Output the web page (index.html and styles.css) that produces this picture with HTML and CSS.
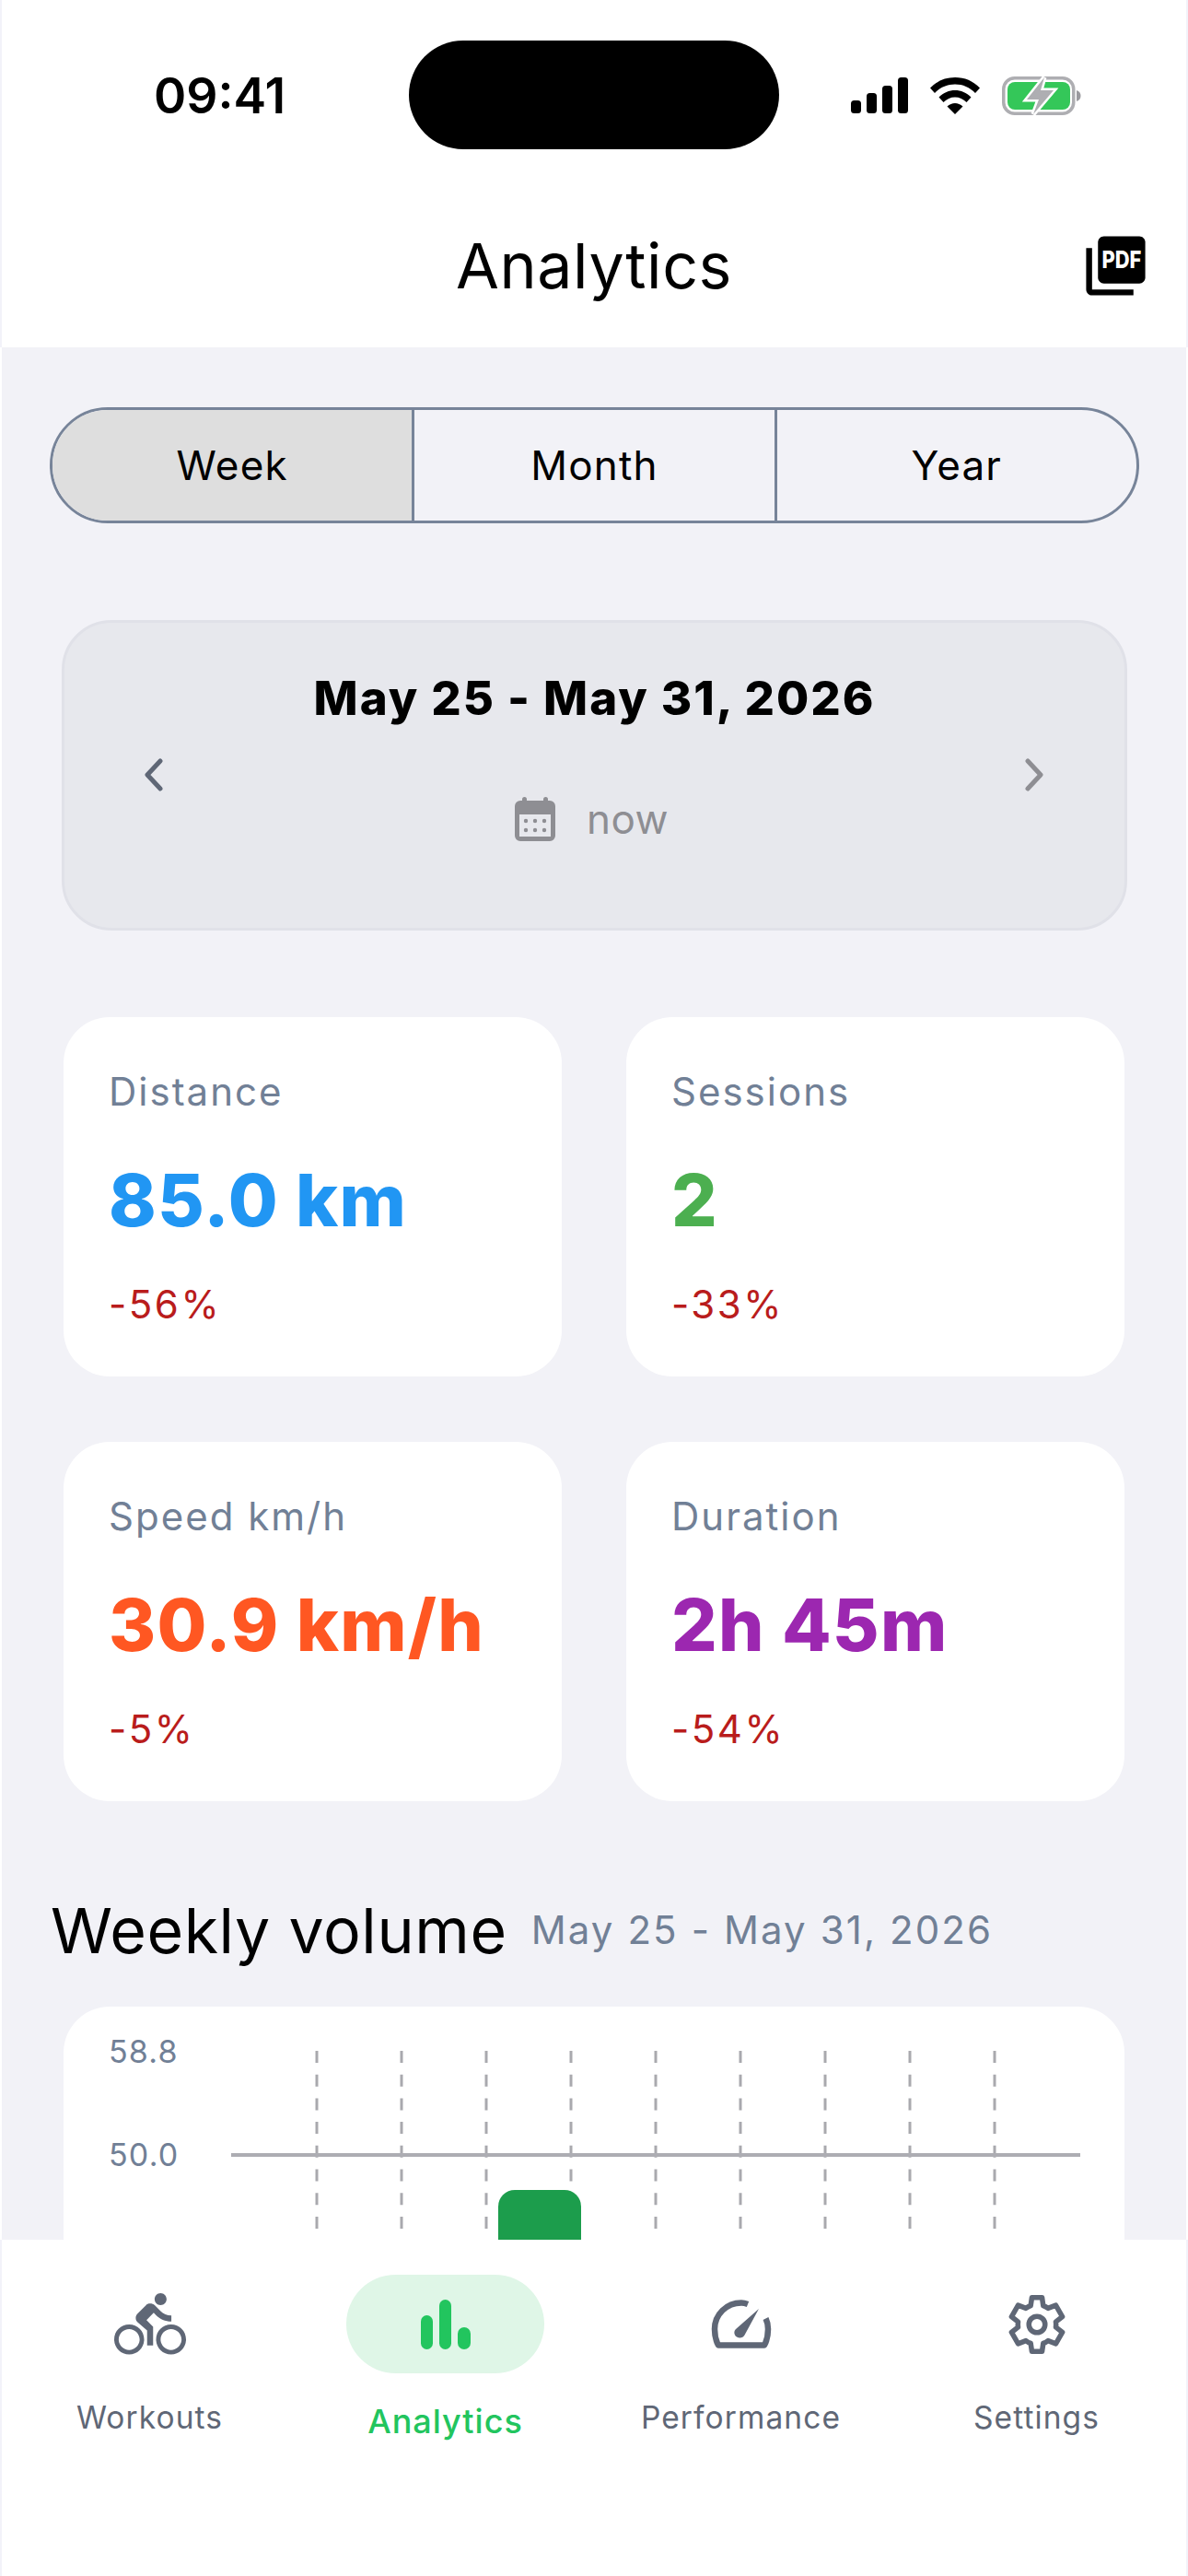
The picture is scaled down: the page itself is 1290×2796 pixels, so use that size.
FILE: index.html
```html
<!DOCTYPE html>
<html lang="en">
<head>
<meta charset="utf-8">
<title>Analytics</title>
<link rel="stylesheet" href="styles.css">
</head>
<body>
<div class="screen">
  <header class="top">
    <div class="status">
      <span class="time">09:41</span>
      <div class="island"></div>
      <div class="status-icons">
        <svg class="ic-signal" viewBox="0 0 62 39"><rect x="0" y="25" width="11" height="14" rx="3.5"/><rect x="17" y="17" width="11" height="22" rx="3.5"/><rect x="34" y="9" width="11" height="30" rx="3.5"/><rect x="51" y="0" width="11" height="39" rx="3.5"/></svg>
        <svg class="ic-wifi" viewBox="0 0 54 40"><path d="M27 0C16.500 0 7.500 3.800 0 11.500L5 17C11 10.800 18.500 7.500 27 7.500S43 10.800 49 17L54 11.500C46.500 3.800 37.500 0 27 0Z"/><path d="M27 14C20.500 14 14.500 16.500 9.500 21.500L14.500 27C18 23.500 22.300 21.500 27 21.500S36 23.500 39.500 27L44.500 21.500C39.500 16.500 33.500 14 27 14Z"/><path d="M27 28C24 28 21 29.200 18.500 31.500L27 40L35.500 31.500C33 29.200 30 28 27 28Z"/></svg>
        <svg class="ic-battery" viewBox="0 0 88 42"><rect x="1.750" y="1.750" width="76" height="38.500" rx="12" fill="none" stroke="#aeaeb2" stroke-width="3.500"/><rect x="6" y="6" width="68" height="30" rx="8" fill="#34c759"/><path d="M81 15C84 16 85.500 18 85.500 21S84 26 81 27Z" fill="#9a9a9e"/><path d="M46 1L27 25H40L34 41L56 15H42Z" fill="#aeaeb2" stroke="#fff" stroke-width="5" paint-order="stroke"/></svg>
      </div>
    </div>
    <div class="titlebar">
      <h1 class="title">Analytics</h1>
      <svg class="ic-pdf" viewBox="0 0 24 24"><path d="M20 2H8c-1.100 0-2 .9-2 2v12c0 1.100.9 2 2 2h12c1.100 0 2-.9 2-2V4c0-1.100-.9-2-2-2z"/><path d="M4 6H2v14c0 1.100.9 2 2 2h14v-2H4V6z"/><text x="14" y="12.900" class="pdf-text" textLength="13.400" lengthAdjust="spacingAndGlyphs">PDF</text></svg>
    </div>
  </header>

  <main class="content">
    <div class="segments">
      <div class="segment active">Week</div>
      <div class="segment">Month</div>
      <div class="segment">Year</div>
    </div>

    <section class="date-card">
      <div class="date-title">May 25 - May 31, 2026</div>
      <div class="date-row">
        <svg class="chev chev-dark" viewBox="0 0 21 36"><path d="M18 3L4 18L18 33"/></svg>
        <svg class="chev chev-light" viewBox="0 0 21 36"><path d="M3 3L17 18L3 33"/></svg>
      </div>
      <div class="date-now">
        <svg class="ic-cal" viewBox="0 0 44 48"><rect x="8" y="0" width="5" height="8" rx="2.500"/><rect x="31" y="0" width="5" height="8" rx="2.500"/><path fill-rule="evenodd" d="M6 4H38A6 6 0 0 1 44 10V42A6 6 0 0 1 38 48H6A6 6 0 0 1 0 42V10A6 6 0 0 1 6 4ZM5 19V43H39V19Z"/><circle cx="12" cy="26" r="2.200"/><circle cx="22" cy="26" r="2.200"/><circle cx="32" cy="26" r="2.200"/><circle cx="12" cy="36" r="2.200"/><circle cx="22" cy="36" r="2.200"/><circle cx="32" cy="36" r="2.200"/></svg>
        <span>now</span>
      </div>
    </section>

    <section class="stats">
      <article class="stat">
        <div class="stat-label">Distance</div>
        <div class="stat-value blue">85.0 km</div>
        <div class="stat-delta">-56%</div>
      </article>
      <article class="stat">
        <div class="stat-label">Sessions</div>
        <div class="stat-value green">2</div>
        <div class="stat-delta">-33%</div>
      </article>
      <article class="stat">
        <div class="stat-label">Speed km/h</div>
        <div class="stat-value orange">30.9 km/h</div>
        <div class="stat-delta">-5%</div>
      </article>
      <article class="stat">
        <div class="stat-label">Duration</div>
        <div class="stat-value purple">2h 45m</div>
        <div class="stat-delta">-54%</div>
      </article>
    </section>

    <div class="volume-head">
      <h2 class="volume-title">Weekly volume</h2>
      <span class="volume-range">May 25 - May 31, 2026</span>
    </div>

    <section class="chart-card">
      <div class="axis">
        <span>58.8</span>
        <span>50.0</span>
      </div>
      <svg class="chart" viewBox="0 0 922 340">
        <g class="grid-v">
          <line x1="93" x2="93" y1="0" y2="340"/>
          <line x1="185" x2="185" y1="0" y2="340"/>
          <line x1="277" x2="277" y1="0" y2="340"/>
          <line x1="369" x2="369" y1="0" y2="340"/>
          <line x1="461" x2="461" y1="0" y2="340"/>
          <line x1="553" x2="553" y1="0" y2="340"/>
          <line x1="645" x2="645" y1="0" y2="340"/>
          <line x1="737" x2="737" y1="0" y2="340"/>
          <line x1="829" x2="829" y1="0" y2="340"/>
        </g>
        <line class="grid-h" x1="0" x2="922" y1="113" y2="113"/>
        <path class="bar" d="M290 340V169A18 18 0 0 1 308 151H362A18 18 0 0 1 380 169V340Z"/>
      </svg>
    </section>
  </main>

  <nav class="tabbar">
    <div class="tab">
      <div class="tab-icon">
        <svg viewBox="0 0 24 24"><path d="M15.500 5.500c1.100 0 2-.9 2-2s-.9-2-2-2-2 .9-2 2 .9 2 2 2zM5 12c-2.800 0-5 2.200-5 5s2.200 5 5 5 5-2.200 5-5-2.200-5-5-5zm0 8.500c-1.900 0-3.500-1.600-3.500-3.500s1.600-3.500 3.500-3.500 3.500 1.600 3.500 3.500-1.600 3.500-3.500 3.500zm5.800-10l2.400-2.400.8.800c1.300 1.300 3 2.100 5.100 2.100V9c-1.500 0-2.700-.6-3.600-1.500l-1.900-1.900c-.5-.4-1-.6-1.600-.6s-1.100.2-1.400.6L7.800 8.400c-.4.400-.6.900-.6 1.400 0 .6.2 1.100.6 1.400L11 14v5h2v-6.200l-2.200-2.300zM19 12c-2.800 0-5 2.200-5 5s2.200 5 5 5 5-2.200 5-5-2.200-5-5-5zm0 8.500c-1.900 0-3.500-1.600-3.500-3.500s1.600-3.500 3.500-3.500 3.500 1.600 3.500 3.500-1.600 3.500-3.500 3.500z"/></svg>
      </div>
      <span class="tab-label">Workouts</span>
    </div>
    <div class="tab tab-active">
      <div class="tab-icon">
        <svg viewBox="0 0 54 54"><rect x="0" y="17" width="13" height="37" rx="6.500"/><rect x="20" y="0" width="13" height="54" rx="6.500"/><rect x="40" y="30" width="14" height="24" rx="7"/></svg>
      </div>
      <span class="tab-label">Analytics</span>
    </div>
    <div class="tab">
      <div class="tab-icon">
        <svg viewBox="0 0 78 78"><path class="gauge" d="M46 17C43.500 16 41.500 15.500 39 15.500C23 15.500 10 28 10 44C10 50 11 56 14 61.500H64C67 56 68 50 68 44C68 40 67.200 36 65.500 32.500"/><path d="M58 22L42.500 50.500C41 53.500 37 54.500 34 52.500C31 50.500 30.500 46.500 33 44Z"/></svg>
      </div>
      <span class="tab-label">Performance</span>
    </div>
    <div class="tab">
      <div class="tab-icon">
        <svg viewBox="0 0 24 24"><path class="gear" d="M18.300 12.900c.04-.3.06-.6.06-.9s-.02-.6-.07-.9l2.200-1.700-2.200-3.800-2.600 1c-.5-.4-1-.7-1.600-.9L13.700 3H10.300l-.4 2.700c-.6.2-1.100.5-1.600.9l-2.600-1-2.200 3.800 2.200 1.700c-.05.3-.07.6-.07.9s.02.6.07.9l-2.200 1.700 2.200 3.800 2.600-1c.5.4 1 .7 1.600.9l.4 2.700h3.400l.4-2.700c.6-.2 1.100-.5 1.600-.9l2.600 1 2.200-3.800z"/><circle class="gear" cx="12" cy="12" r="2.700"/></svg>
      </div>
      <span class="tab-label">Settings</span>
    </div>
  </nav>
</div>
</body>
</html>
```

FILE: styles.css
```css
* { box-sizing: border-box; margin: 0; padding: 0; }
html, body { width: 1290px; height: 2796px; overflow: hidden; background: #fff; }
body { font-family: "Inter", "Liberation Sans", sans-serif; color: #000; }

.screen { position: relative; width: 1286px; height: 2796px; margin: 0 2px; background: #f2f2f7; display: flex; flex-direction: column; }

.top { height: 377px; background: #fff; flex: none; box-shadow: -2px 0 0 #f2f2f9, 2px 0 0 #f2f2f9; }
.status { height: 206px; padding-top: 44px; display: flex; align-items: flex-start; }
.time { width: 442px; padding: 30px 0 0 165px; font-size: 53.500px; line-height: 60px; font-weight: 600; }
.island { width: 402px; height: 118px; background: #000; border-radius: 59px; flex: none; }
.status-icons { display: flex; align-items: flex-start; padding: 40px 0 0 78px; }
.ic-signal { width: 62px; height: 39px; }
.ic-wifi { width: 54px; height: 40px; margin-left: 24px; }
.ic-battery { width: 88px; height: 42px; margin: -1px 0 0 24px; }

.titlebar { position: relative; height: 171px; display: flex; justify-content: center; }
.title { font-size: 68px; line-height: 78px; font-weight: 400; margin-top: 43px; letter-spacing: 0.6px; }
.ic-pdf { position: absolute; right: 38px; top: 44px; width: 77px; height: 77px; }
.pdf-text { font-family: "Inter", sans-serif; font-weight: 800; font-size: 8.100px; fill: #fff; text-anchor: middle; }

.content { flex: 1; padding: 65px 51px 0 52px; }

.segments { display: flex; height: 126px; border: 3px solid #778499; border-radius: 63px; overflow: hidden; }
.segment { flex: 1; display: flex; align-items: center; justify-content: center; font-size: 44px; letter-spacing: 1.200px; border-left: 3px solid #778499; }
.segment:first-child { border-left: 0; }
.segment.active { background: #dedede; }

.date-card { margin: 105px 13px 0 13px; height: 337px; background: #e7e8ed; border: 3px solid #e0e1e8; border-radius: 54px; padding-top: 52px; }
.date-title { text-align: center; font-size: 51px; line-height: 60px; font-weight: 800; letter-spacing: 1.950px; }
.date-row { display: flex; justify-content: space-between; padding: 0 87px 0 86px; margin-top: 35px; }
.chev { width: 21px; height: 36px; fill: none; stroke-width: 5px; stroke-linecap: round; stroke-linejoin: round; }
.chev-dark { stroke: #5f6776; }
.chev-light { stroke: #8e8e93; }
.date-now { display: flex; justify-content: center; align-items: center; gap: 34px; margin-top: 3px; padding-right: 6px; color: #8e8e93; font-size: 44px; letter-spacing: 0.500px; }
.ic-cal { width: 44px; height: 48px; fill: #8e8e93; }

.stats { display: grid; grid-template-columns: 541px 541px; column-gap: 70px; row-gap: 71px; margin: 94px 0 0 15px; }
.stat { height: 390px; background: #fff; border-radius: 50px; padding: 55px 49px 0; }
.stat-label { font-size: 42px; line-height: 52px; color: #718096; letter-spacing: 2px; }
.stat-value { margin-top: 47px; font-size: 78px; line-height: 90px; font-weight: 800; letter-spacing: 1.200px; }
.stat-delta { margin-top: 42px; font-size: 42px; line-height: 52px; color: #b91c1c; letter-spacing: 2.500px; }
.blue { color: #2196f3; }
.green { color: #4caf50; }
.orange { color: #ff5722; }
.purple { color: #9c27b0; }

.volume-head { display: flex; align-items: center; gap: 26px; margin: 100px 0 0 1px; }
.volume-title { font-size: 68px; line-height: 80px; font-weight: 400; letter-spacing: 0.600px; }
.volume-range { font-size: 42px; color: #718096; letter-spacing: 2.100px; margin-top: -2px; }

.chart-card { position: relative; margin: 43px 0 0 15px; width: 1152px; height: 500px; background: #fff; border-radius: 50px; }
.axis { position: absolute; left: 49px; top: 25px; display: flex; flex-direction: column; gap: 65px; font-size: 34px; line-height: 47px; color: #718096; letter-spacing: 1.200px; }
.chart { position: absolute; left: 182px; top: 48px; width: 922px; height: 340px; }
.grid-v line { stroke: #a9a9ae; stroke-width: 3; stroke-dasharray: 13 12.700; }
.grid-h { stroke: #adadb3; stroke-width: 4; }
.bar { fill: #1c9d4c; }

.tabbar { position: absolute; left: 0; right: 0; bottom: 0; height: 365px; background: #fff; display: grid; grid-template-columns: repeat(4, 321px); padding: 38px 0 0 0; box-shadow: -2px 0 0 #f2f2f9, 2px 0 0 #f2f2f9; }
.tab { display: flex; flex-direction: column; align-items: center; color: #5f6776; }
.tab-icon { width: 215px; height: 107px; border-radius: 54px; display: flex; align-items: center; justify-content: center; }
.tab-icon svg { width: 78px; height: 78px; fill: #5f6776; }
.tab-label { margin-top: 26px; font-size: 33.500px; line-height: 44px; letter-spacing: 1.100px; }
.tab-active .tab-icon { background: #dff6e7; }
.tab-active .tab-icon svg { width: 54px; height: 54px; fill: #22c55e; }
.tab-active .tab-label { margin-top: 30px; color: #22c55e; font-weight: 500; font-size: 36px; letter-spacing: 1px; }
.gauge { fill: none; stroke: #5f6776; stroke-width: 6.500; stroke-linejoin: round; }
.gear { fill: none; stroke: #5f6776; stroke-width: 1.700; stroke-linejoin: round; }
```
